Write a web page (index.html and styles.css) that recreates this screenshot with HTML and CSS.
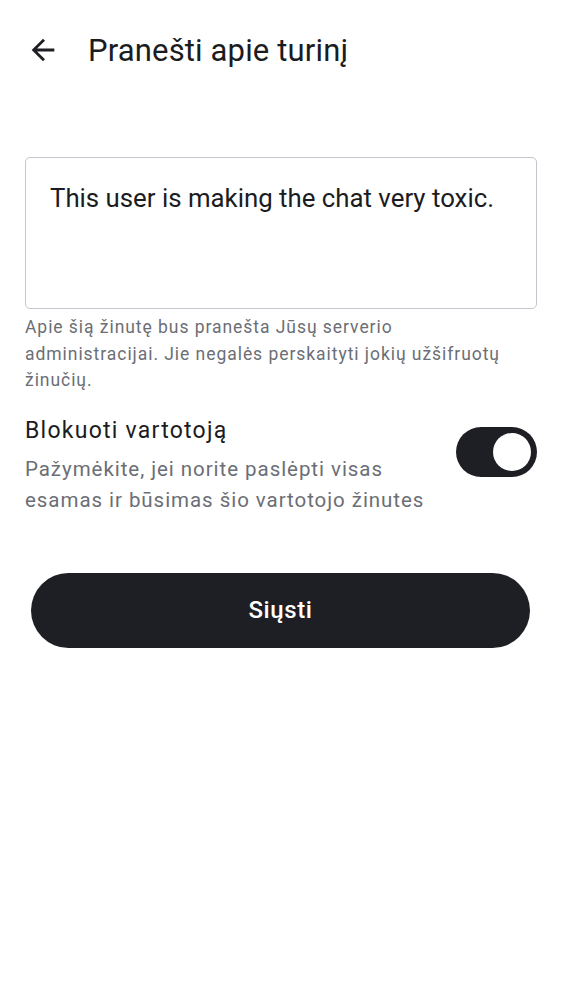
FILE: index.html
```html
<!DOCTYPE html>
<html lang="lt">
<head>
<meta charset="utf-8">
<link rel="stylesheet" href="styles.css">
</head>
<body>
<div class="screen">
  <header class="topbar">
    <span class="back">
      <svg viewBox="0 0 24 24" width="34" height="34"><path d="M20 11H7.83l5.59-5.59L12 4l-8 8 8 8 1.41-1.41L7.83 13H20v-2z" fill="#1e1f24"/></svg>
    </span>
    <h1 class="title">Pranešti apie turinį</h1>
  </header>
  <main class="content">
    <div class="field">This user is making the chat very toxic.</div>
    <p class="helper">Apie šią žinutę bus pranešta Jūsų serverio administracijai. Jie negalės perskaityti jokių užšifruotų žinučių.</p>
    <div class="option">
      <div class="option-text">
        <div class="option-title">Blokuoti vartotoją</div>
        <div class="option-desc">Pažymėkite, jei norite paslėpti visas esamas ir būsimas šio vartotojo žinutes</div>
      </div>
      <div class="toggle"><span class="thumb"></span></div>
    </div>
    <button class="send">Siųsti</button>
  </main>
</div>
</body>
</html>
```
FILE: styles.css
```css
* { box-sizing: border-box; }
html, body { margin: 0; padding: 0; background: #fff; }
body { font-family: Roboto, "Noto Sans", sans-serif; color: #1b1c21; }
.screen { width: 562px; min-height: 1000px; }
.topbar {
  height: 100px;
  display: flex;
  align-items: center;
  padding-left: 26px;
}
.back { width: 34px; height: 34px; display: flex; }
.title {
  margin: 0 0 0 28px;
  font-size: 31px;
  font-weight: 400;
  letter-spacing: 0.15px;
  color: #1b1c21;
}
.content { padding: 57px 25px 0 25px; }
.field {
  height: 152px;
  border: 1px solid #c3c6cc;
  border-radius: 5px;
  padding: 24px 24px;
  font-size: 25.8px;
  line-height: 32px;
  color: #1b1c21;
}
.helper {
  margin: 5px 0 0 0;
  max-width: 500px;
  font-size: 17.5px;
  line-height: 26.5px;
  letter-spacing: 0.95px;
  color: #6b6e75;
}
.option {
  margin-top: 22px;
  display: flex;
  align-items: flex-start;
  justify-content: space-between;
}
.option-text { width: 428px; }
.option-title { font-size: 23px; line-height: 30px; letter-spacing: 1.25px; color: #1b1c21; }
.option-desc {
  margin-top: 8px;
  font-size: 20.5px;
  line-height: 31px;
  letter-spacing: 0.95px;
  color: #6b6e75;
}
.toggle {
  margin-top: 11px;
  width: 81px;
  height: 50px;
  border-radius: 25px;
  background: #1e1f24;
  display: flex;
  align-items: center;
  justify-content: flex-end;
  padding-right: 6px;
}
.thumb { width: 38px; height: 38px; border-radius: 50%; background: #fff; }
.send {
  display: block;
  margin: 57px 0 0 6px;
  width: 499px;
  height: 75px;
  border: none;
  border-radius: 38px;
  background: #1e1f24;
  color: #fff;
  font-family: Roboto, "Noto Sans", sans-serif;
  font-size: 24px;
  font-weight: 500;
  letter-spacing: 0.6px;
}
```
